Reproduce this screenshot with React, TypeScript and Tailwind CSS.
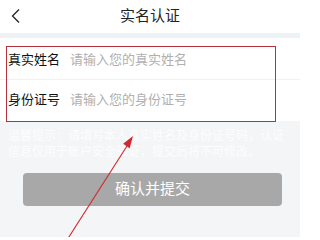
export default function App() {
  return (
    <div
      className="relative w-[300px] h-[237px] overflow-hidden bg-[#f4f5f7]"
      style={{ fontFamily: '"Liberation Sans", "Noto Sans CJK SC", sans-serif' }}
    >
      {/* Header */}
      <div className="relative flex h-[33px] items-center justify-center bg-white">
        <svg
          className="absolute left-[10px] top-[8px]"
          width="11"
          height="16"
          viewBox="0 0 11 16"
          fill="none"
        >
          <path d="M9 1.5 L2.5 8 L9 14.5" stroke="#222" strokeWidth="1.3" />
        </svg>
        <span className="text-[15px] text-[#222]">实名认证</span>
      </div>
      <div className="h-[5px] bg-[#edf2f4]" />

      {/* Form */}
      <div className="bg-white pt-[2px] pb-[1px]">
        <div className="flex h-[40px] items-center border-b border-[#f1f1f1] pl-[8px]">
          <span className="w-[62px] text-[13px] text-[#111]">真实姓名</span>
          <span className="text-[13px] text-[#b0b0b0]">请输入您的真实姓名</span>
        </div>
        <div className="flex h-[40px] items-center pl-[8px]">
          <span className="w-[62px] text-[13px] text-[#111]">身份证号</span>
          <span className="text-[13px] text-[#b0b0b0]">请输入您的身份证号</span>
        </div>
      </div>

      {/* Notes */}
      <div className="mt-[7px] whitespace-nowrap px-[8px] text-[12px] leading-[16px] text-[#fdfdfe]">
        <p>温馨提示：请填写本人真实姓名及身份证号码，认证</p>
        <p>信息仅用于账户安全验证，提交后将不可修改。</p>
      </div>

      {/* Submit */}
      <button
        type="button"
        className="ml-[23px] mt-[13px] flex h-[33px] w-[259px] items-center justify-center rounded-[4px] bg-[#a8a8a8] text-[15px] text-white"
      >
        确认并提交
      </button>

      {/* Annotation box */}
      <div className="absolute left-[6px] top-[46px] h-[76px] w-[270px] border border-[#b3323b]" />

      {/* Annotation arrow */}
      <svg className="absolute left-0 top-0" width="300" height="237" viewBox="0 0 300 237">
        <line x1="67" y1="240" x2="127" y2="146" stroke="#d0282e" strokeWidth="1.1" />
        <polygon points="133,136 129.7,148.2 123.1,143.8" fill="#d0282e" />
      </svg>
    </div>
  );
}
